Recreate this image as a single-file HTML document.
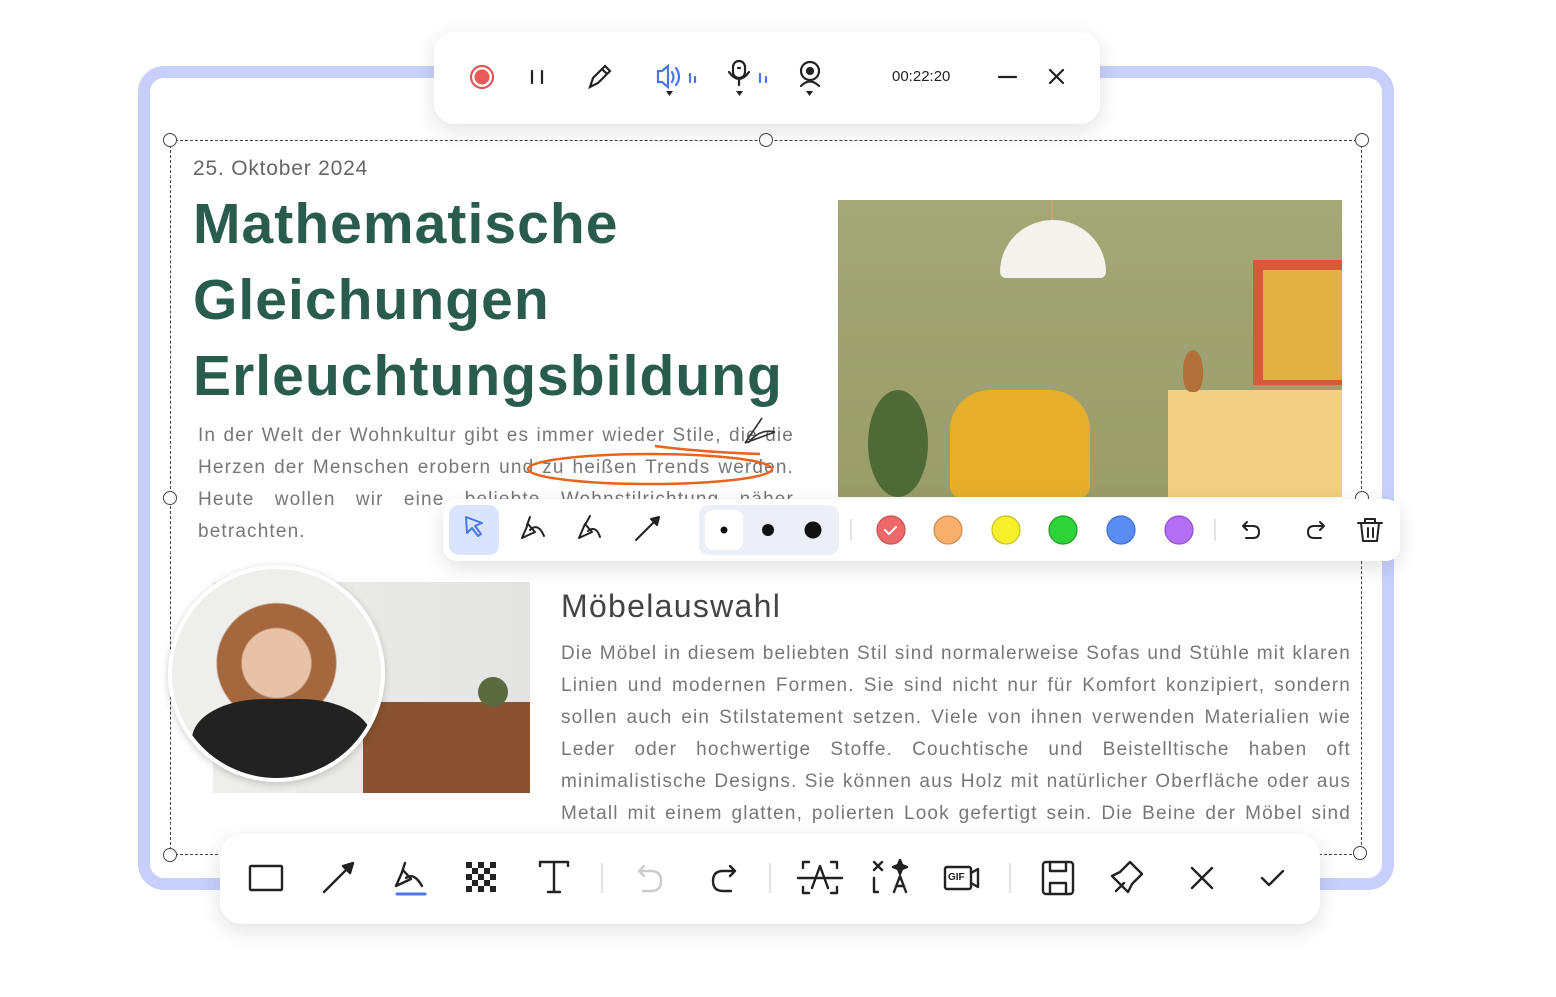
<!DOCTYPE html>
<html><head><meta charset="utf-8"><style>
*{margin:0;padding:0;box-sizing:border-box}
body{width:1556px;height:997px;background:#fff;position:relative;overflow:hidden;font-family:"Liberation Sans","DejaVu Sans",sans-serif}
.abs{position:absolute}
.frame{left:138px;top:66px;width:1256px;height:824px;border:12px solid #c8cffb;border-radius:26px;background:#fff}
.dash{left:170px;top:140px;width:1192px;height:715px;border:1.5px dashed #444}
.h{position:absolute;width:14px;height:14px;border:1.5px solid #444;border-radius:50%;background:#fff}
.bar{background:#fff;border-radius:20px;box-shadow:0 6px 22px rgba(0,0,0,.12)}
.title{left:193px;color:#2a5c4d;font-weight:bold;font-size:57px;line-height:76px;letter-spacing:1.05px}
.p1{left:198px;top:420px;width:596px;color:#777;font-size:19px;line-height:32px;text-align:justify;letter-spacing:1.15px}
.p2{left:561px;top:638px;width:790px;color:#777;font-size:19px;line-height:32px;text-align:justify;letter-spacing:1.15px}
svg{position:absolute;overflow:visible}
</style></head><body>
<div class="abs frame"></div>
<div class="abs dash"></div>
<div class="h" style="left:163px;top:133px"></div>
<div class="h" style="left:759px;top:133px"></div>
<div class="h" style="left:1355px;top:133px"></div>
<div class="h" style="left:163px;top:491px"></div>
<div class="h" style="left:1355px;top:491px"></div>
<div class="h" style="left:163px;top:848px"></div>
<div class="h" style="left:1353px;top:846px"></div>

<div class="abs" style="left:193px;top:157px;font-size:21px;color:#666;letter-spacing:.8px">25. Oktober 2024</div>
<div class="abs title" style="top:186px">Mathematische</div>
<div class="abs title" style="top:262px">Gleichungen</div>
<div class="abs title" style="top:338px">Erleuchtungsbildung</div>
<div class="abs p1">In der Welt der Wohnkultur gibt es immer wieder Stile, die die Herzen der Menschen erobern und zu heißen Trends werden. Heute wollen wir eine beliebte Wohnstilrichtung näher betrachten.</div>
<svg style="left:0;top:0" width="1556" height="997"><g fill="none" stroke="#e8641c" stroke-width="2.5"><ellipse cx="650" cy="469" rx="122" ry="15"/><path d="M655 446 Q700 452 760 454"/></g>
<path d="M745 443 L762 418 M748 443 Q760 428 775 432 M745 443 L775 432" stroke="#333" stroke-width="1.6" fill="none"/></svg>

<!-- photo -->
<div class="abs" style="left:838px;top:200px;width:504px;height:297px;background:linear-gradient(180deg,#a4a776,#9a9d6a);overflow:hidden">
 <div class="abs" style="left:213px;top:0;width:2px;height:20px;background:#c9a070"></div>
 <div class="abs" style="left:162px;top:20px;width:106px;height:58px;background:#f4f2ec;border-radius:50% 50% 6px 6px/90% 90% 6px 6px"></div>
 <div class="abs" style="left:415px;top:60px;width:90px;height:125px;background:#d8583a"></div>
 <div class="abs" style="left:425px;top:70px;width:80px;height:110px;background:#e0b040"></div>
 <div class="abs" style="left:330px;top:190px;width:174px;height:107px;background:#f1cf84"></div>
 <div class="abs" style="left:345px;top:150px;width:20px;height:42px;background:#b4703a;border-radius:50% 50% 40% 40%"></div>
 <div class="abs" style="left:112px;top:190px;width:140px;height:107px;background:#e7ae2c;border-radius:40px 40px 10px 10px"></div>
 <div class="abs" style="left:30px;top:190px;width:60px;height:107px;background:#4f6a36;border-radius:50%"></div>
</div>

<!-- top bar -->
<div class="abs bar" style="left:434px;top:32px;width:666px;height:92px"></div>
<svg style="left:0;top:0" width="1556" height="997" fill="none" stroke="#222" stroke-width="2.2" stroke-linecap="round">
<circle cx="482" cy="77" r="11" stroke="#e05757"/><circle cx="482" cy="77" r="7.5" fill="#e95a5a" stroke="none"/>
<path d="M532 71v12M542 71v12"/>
<path d="M590 87l3-9 12-12 5 5-12 12z M602 69l5 5"/>
<g stroke="#4a76e8"><path d="M658 71h4l6-5v21l-6-5h-4z M672 72q3 5 0 10 M676 68q6 9 0 17 M690 74v8 M695 77v5"/></g>
<path d="M666 91h7l-3.5 5z M736 91h7l-3.5 5z M806 91h7l-3.5 5z" fill="#222" stroke="none"/>
<rect x="733" y="61" width="12" height="17" rx="6"/><path d="M738 68h2 M729 72q10 14 20 0 M739 79v6"/>
<path d="M760 74v8 M766 77v5" stroke="#4a76e8"/>
<circle cx="810" cy="71" r="9"/><circle cx="810" cy="71" r="3" fill="#222"/><path d="M801 86q9-9 18 0"/>
<path d="M999 77h17 M1050 70l13 13M1063 70l-13 13"/>
</svg>
<div class="abs" style="left:892px;top:68px;font-size:15px;color:#222">00:22:20</div>

<!-- middle bar -->
<div class="abs bar" style="left:443px;top:499px;width:957px;height:62px;border-radius:14px"></div>
<div class="abs" style="left:449px;top:505px;width:50px;height:50px;background:#dbe4ff;border-radius:10px"></div>
<div class="abs" style="left:699px;top:505px;width:140px;height:50px;background:#eceff8;border-radius:10px"></div>
<div class="abs" style="left:705px;top:510px;width:38px;height:40px;background:#fff;border-radius:8px"></div>
<svg style="left:0;top:0" width="1556" height="997" fill="none" stroke="#222" stroke-width="2" stroke-linecap="round" stroke-linejoin="round">
<path d="M466 517l16 6-7 3 6 8-3 2-6-8-5 5z" stroke="#4a76e8"/>
<path d="M522 538l6-14 7 8-13 6 M527 525l3-8 M530 530q8-8 14 6" />
<path d="M579 538l6-14 7 8-13 6 M585 525l5-9 M588 531q8-6 12 6"/>
<path d="M636 540l20-20" /><path d="M659 517l-8 2 6 6z" fill="#222"/>
<circle cx="724" cy="530" r="3.5" fill="#111" stroke="none"/><circle cx="768" cy="530" r="6" fill="#111" stroke="none"/><circle cx="813" cy="530" r="8.5" fill="#111" stroke="none"/>
<g stroke-width="1.2"><circle cx="891" cy="530" r="14" fill="#ec6a6a" stroke="#c85050"/><circle cx="948" cy="530" r="14" fill="#f8ae6c" stroke="#d08a50"/><circle cx="1006" cy="530" r="14" fill="#f6ef2c" stroke="#c8c020"/><circle cx="1063" cy="530" r="14" fill="#2ed33a" stroke="#20a028"/><circle cx="1121" cy="530" r="14" fill="#5b8cf3" stroke="#4070d0"/><circle cx="1179" cy="530" r="14" fill="#b36ef5" stroke="#9050d0"/></g>
<path d="M885 530l4 4 7-7" stroke="#fff"/>
<path d="M1247 522l-4 4 4 4 M1243 526h10q6 0 6 6t-6 6h-7 M1320 522l4 4-4 4 M1324 526h-10q-6 0-6 6t6 6h7"/>
<path d="M1358 523h24 M1365 523v-4h10v4 M1361 523l2 18h14l2-18 M1368 528v9 M1373 528v9"/>
<path d="M851 520v20 M1215 520v20" stroke="#e4e4e4"/>
</svg>

<!-- bottom left image -->
<div class="abs" style="left:213px;top:582px;width:317px;height:211px;background:linear-gradient(90deg,#eeeeec,#e4e4e2);overflow:hidden">
 <div class="abs" style="left:150px;top:120px;width:167px;height:91px;background:#8a5230"></div>
 <div class="abs" style="left:265px;top:95px;width:30px;height:30px;background:#5c6a40;border-radius:50%"></div>
</div>
<div class="abs" style="left:168px;top:565px;width:217px;height:217px;border-radius:50%;border:4px solid #fff;box-shadow:0 2px 8px rgba(0,0,0,.2);background:radial-gradient(circle at 50% 45%,#e8c2a8 0 22%,#a5683e 23% 38%,#eeeeec 39%);overflow:hidden">
 <div class="abs" style="left:20px;top:130px;width:180px;height:100px;background:#222;border-radius:40% 40% 0 0"></div>
</div>

<div class="abs" style="left:561px;top:588px;font-size:32px;color:#444;letter-spacing:1.3px">Möbelauswahl</div>
<div class="abs p2">Die Möbel in diesem beliebten Stil sind normalerweise Sofas und Stühle mit klaren Linien und modernen Formen. Sie sind nicht nur für Komfort konzipiert, sondern sollen auch ein Stilstatement setzen. Viele von ihnen verwenden Materialien wie Leder oder hochwertige Stoffe. Couchtische und Beistelltische haben oft minimalistische Designs. Sie können aus Holz mit natürlicher Oberfläche oder aus Metall mit einem glatten, polierten Look gefertigt sein. Die Beine der Möbel sind oft schlank und leicht.</div>

<!-- bottom bar -->
<div class="abs bar" style="left:220px;top:834px;width:1100px;height:90px;border-radius:22px"></div>
<svg style="left:0;top:0" width="1556" height="997" fill="none" stroke="#222" stroke-width="2.4" stroke-linecap="round" stroke-linejoin="round">
<rect x="250" y="866" width="32" height="24" rx="1"/>
<path d="M324 892l24-24"/><path d="M353 863l-10 3 7 7z" fill="#222"/>
<path d="M396 886l7-16 8 9-15 7 M402 872l3-9 M406 878q8-6 16 8"/><path d="M397 894h28" stroke="#4a76e8" stroke-width="3"/>
<g fill="#222" stroke="none"><rect x="466" y="862" width="6" height="6"/><rect x="478" y="862" width="6" height="6"/><rect x="490" y="862" width="6" height="6"/><rect x="472" y="868" width="6" height="6"/><rect x="484" y="868" width="6" height="6"/><rect x="466" y="874" width="6" height="6"/><rect x="478" y="874" width="6" height="6"/><rect x="490" y="874" width="6" height="6"/><rect x="472" y="880" width="6" height="6"/><rect x="484" y="880" width="6" height="6"/><rect x="466" y="886" width="6" height="6"/><rect x="478" y="886" width="6" height="6"/><rect x="490" y="886" width="6" height="6"/></g>
<path d="M540 866v-4h28v4 M554 862v30 M548 892h12"/>
<path d="M602 864v28 M770 864v28 M1010 864v28" stroke="#e4e4e4"/>
<path d="M644 866l-5 5 5 5 M639 871h12q10 0 10 10t-10 10h-8" stroke="#ccc"/>
<path d="M730 866l5 5-5 5 M735 871h-12q-10 0-10 10t10 10h8"/>
<path d="M803 868v-6h6 M831 862h6v6 M803 887v6h6 M831 893h6v-6 M798 878h44 M812 888l8-22 8 22"/>
<path d="M874 862l8 8 M882 862l-8 8 M874 878v14h4 M894 892l6-16 6 16 M897 886h6"/><path d="M900 860l2 5 5 2-5 2-2 5-2-5-5-2 5-2z" fill="#222"/>
<rect x="945" y="867" width="26" height="22" rx="2"/><path d="M971 873l7-4v18l-7-4"/>
<rect x="1043" y="862" width="30" height="32" rx="3"/><path d="M1050 862v9h16v-9 M1050 894v-11h16v11"/>
<path d="M1116 891l8-8 M1120 872l10-10 12 12-10 10-4 8-16-16z"/>
<path d="M1192 868l20 20 M1212 868l-20 20 M1262 878l7 7 14-14"/>
</svg>
<div class="abs" style="left:948px;top:872px;font-size:10px;font-weight:bold;color:#222">GIF</div>
</body></html>
